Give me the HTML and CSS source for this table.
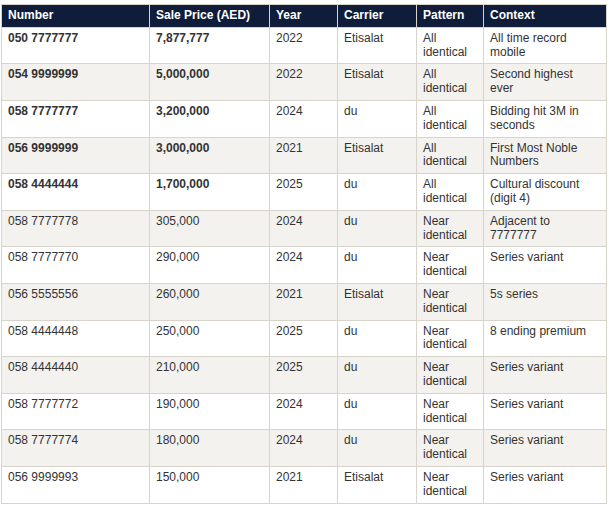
FILE: index.html
```html
<!DOCTYPE html>
<html>
<head>
<meta charset="utf-8">
<link rel="stylesheet" href="styles.css">
</head>
<body>
<table class="sales">
<colgroup>
<col class="c-num"><col class="c-price"><col class="c-year"><col class="c-carrier"><col class="c-pattern"><col class="c-context">
</colgroup>
<thead>
<tr><th>Number</th><th>Sale Price (AED)</th><th>Year</th><th>Carrier</th><th>Pattern</th><th>Context</th></tr>
</thead>
<tbody>
<tr><td class="b">050 7777777</td><td class="b">7,877,777</td><td>2022</td><td>Etisalat</td><td>All identical</td><td>All time record mobile</td></tr>
<tr><td class="b">054 9999999</td><td class="b">5,000,000</td><td>2022</td><td>Etisalat</td><td>All identical</td><td>Second highest ever</td></tr>
<tr><td class="b">058 7777777</td><td class="b">3,200,000</td><td>2024</td><td>du</td><td>All identical</td><td>Bidding hit 3M in seconds</td></tr>
<tr><td class="b">056 9999999</td><td class="b">3,000,000</td><td>2021</td><td>Etisalat</td><td>All identical</td><td>First Most Noble Numbers</td></tr>
<tr><td class="b">058 4444444</td><td class="b">1,700,000</td><td>2025</td><td>du</td><td>All identical</td><td>Cultural discount (digit 4)</td></tr>
<tr><td>058 7777778</td><td>305,000</td><td>2024</td><td>du</td><td>Near identical</td><td>Adjacent to 7777777</td></tr>
<tr><td>058 7777770</td><td>290,000</td><td>2024</td><td>du</td><td>Near identical</td><td>Series variant</td></tr>
<tr><td>056 5555556</td><td>260,000</td><td>2021</td><td>Etisalat</td><td>Near identical</td><td>5s series</td></tr>
<tr><td>058 4444448</td><td>250,000</td><td>2025</td><td>du</td><td>Near identical</td><td>8 ending premium</td></tr>
<tr><td>058 4444440</td><td>210,000</td><td>2025</td><td>du</td><td>Near identical</td><td>Series variant</td></tr>
<tr><td>058 7777772</td><td>190,000</td><td>2024</td><td>du</td><td>Near identical</td><td>Series variant</td></tr>
<tr><td>058 7777774</td><td>180,000</td><td>2024</td><td>du</td><td>Near identical</td><td>Series variant</td></tr>
<tr><td>056 9999993</td><td>150,000</td><td>2021</td><td>Etisalat</td><td>Near identical</td><td>Series variant</td></tr>
</tbody>
</table>
</body>
</html>
```
FILE: styles.css
```css
html, body {
  margin: 0;
  background: #ffffff;
}
body {
  padding: 4px 0 0 1px;
  font-family: "Liberation Sans", Arial, sans-serif;
  font-size: 12px;
  color: #333333;
}
.sales {
  border-collapse: collapse;
  table-layout: fixed;
  width: 605px;
}
.c-num { width: 148px; }
.c-price { width: 120px; }
.c-year { width: 68px; }
.c-carrier { width: 79px; }
.c-pattern { width: 67px; }
.c-context { width: 123px; }
.sales th,
.sales td {
  border: 1px solid #d8d4cc;
  padding: 4px 8px 4px 6px;
  text-align: left;
  vertical-align: top;
  line-height: 13.8px;
}
.sales th {
  background: #0f1d3a;
  color: #ffffff;
  font-weight: bold;
  border-color: #d8d4cc;
}
.sales tbody tr:nth-child(even) td {
  background: #f3f2ee;
}
.sales td.b {
  font-weight: bold;
}
```
